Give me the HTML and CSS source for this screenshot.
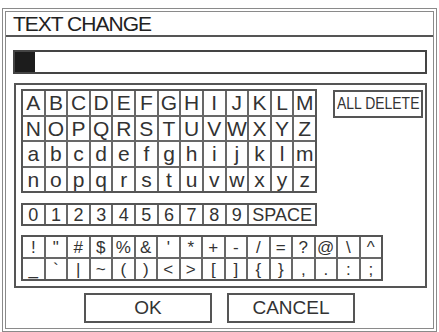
FILE: index.html
```html
<!DOCTYPE html>
<html>
<head>
<meta charset="utf-8">
<link rel="stylesheet" href="styles.css">
</head>
<body>
<div class="frame">
  <div class="title">TEXT CHANGE</div>
  <div class="input"><span class="cursor"></span></div>
  <div class="panel">
    <div class="top">
      <div class="grid letters">
        <div class="cell">A</div><div class="cell">B</div><div class="cell">C</div><div class="cell">D</div><div class="cell">E</div><div class="cell">F</div><div class="cell">G</div><div class="cell">H</div><div class="cell">I</div><div class="cell">J</div><div class="cell">K</div><div class="cell">L</div><div class="cell">M</div>
        <div class="cell">N</div><div class="cell">O</div><div class="cell">P</div><div class="cell">Q</div><div class="cell">R</div><div class="cell">S</div><div class="cell">T</div><div class="cell">U</div><div class="cell">V</div><div class="cell">W</div><div class="cell">X</div><div class="cell">Y</div><div class="cell">Z</div>
        <div class="cell">a</div><div class="cell">b</div><div class="cell">c</div><div class="cell">d</div><div class="cell">e</div><div class="cell">f</div><div class="cell">g</div><div class="cell">h</div><div class="cell">i</div><div class="cell">j</div><div class="cell">k</div><div class="cell">l</div><div class="cell">m</div>
        <div class="cell">n</div><div class="cell">o</div><div class="cell">p</div><div class="cell">q</div><div class="cell">r</div><div class="cell">s</div><div class="cell">t</div><div class="cell">u</div><div class="cell">v</div><div class="cell">w</div><div class="cell">x</div><div class="cell">y</div><div class="cell">z</div>
      </div>
      <div class="alldel"><span class="narrow">ALL DELETE</span></div>
    </div>
    <div class="grid numbers">
      <div class="cell">0</div><div class="cell">1</div><div class="cell">2</div><div class="cell">3</div><div class="cell">4</div><div class="cell">5</div><div class="cell">6</div><div class="cell">7</div><div class="cell">8</div><div class="cell">9</div><div class="cell space">SPACE</div>
    </div>
    <div class="grid symbols">
      <div class="cell">!</div><div class="cell">"</div><div class="cell">#</div><div class="cell">$</div><div class="cell">%</div><div class="cell">&amp;</div><div class="cell">'</div><div class="cell">*</div><div class="cell">+</div><div class="cell">-</div><div class="cell">/</div><div class="cell">=</div><div class="cell">?</div><div class="cell">@</div><div class="cell">\</div><div class="cell">^</div>
      <div class="cell">_</div><div class="cell">`</div><div class="cell">|</div><div class="cell">~</div><div class="cell">(</div><div class="cell">)</div><div class="cell">&lt;</div><div class="cell">&gt;</div><div class="cell">[</div><div class="cell">]</div><div class="cell">{</div><div class="cell">}</div><div class="cell">,</div><div class="cell">.</div><div class="cell">:</div><div class="cell">;</div>
    </div>
  </div>
  <div class="buttons">
    <div class="btn">OK</div>
    <div class="btn">CANCEL</div>
  </div>
</div>
</body>
</html>
```
FILE: styles.css
```css
* { box-sizing: border-box; }
html, body { margin: 0; padding: 0; background: #fff; }
body {
  font-family: "Liberation Sans", Arial, sans-serif;
  color: #333;
  overflow: hidden;
}
.frame {
  margin: 8px 0 0 2px;
  width: 435px;
  height: 324px;
  border: 4px double #8a8a8a;
  display: flex;
  flex-direction: column;
}
.title {
  height: 25px;
  border-bottom: 2px solid #555;
  font-size: 21px;
  line-height: 24px;
  padding-left: 7px;
  letter-spacing: -1px;
  color: #222;
}
.input {
  margin: 13px 0 0 7px;
  width: 414px;
  height: 24px;
  border: 2px solid #444;
  flex: none;
}
.cursor {
  display: block;
  width: 20px;
  height: 100%;
  background: #1c1c1c;
}
.panel {
  margin: 9px 0 0 8px;
  width: 413px;
  height: 205px;
  border: 2px solid #555;
  padding: 4px 0 0 5px;
  flex: none;
}
.top {
  display: flex;
  align-items: flex-start;
}
.grid {
  display: grid;
  gap: 2px;
  background: #686868;
  border: 2px solid #555;
}
.cell {
  background: #fff;
  display: flex;
  align-items: center;
  justify-content: center;
  line-height: 1;
}
.letters {
  width: 296px;
  height: 104px;
  grid-template-columns: repeat(13, 1fr);
  grid-template-rows: repeat(4, 1fr);
  font-size: 21px;
}
.alldel {
  margin: 1px 0 0 16px;
  width: 90px;
  height: 28px;
  border: 2px solid #555;
  font-size: 17px;
  display: flex;
  align-items: center;
  justify-content: center;
  white-space: nowrap;
}
.narrow {
  display: inline-block;
  transform: scaleX(0.82);
}
.numbers {
  margin-top: 10px;
  width: 296px;
  height: 23px;
  grid-template-columns: repeat(13, 1fr);
  font-size: 18px;
}
.space { grid-column: span 3; }
.symbols {
  margin-top: 9px;
  width: 362px;
  height: 46px;
  grid-template-columns: repeat(16, 1fr);
  grid-template-rows: repeat(2, 1fr);
  font-size: 17px;
}
.buttons {
  display: flex;
  justify-content: center;
  gap: 15px;
  margin-top: 5px;
}
.btn {
  width: 128px;
  height: 30px;
  border: 2px solid #555;
  font-size: 19px;
  display: flex;
  align-items: center;
  justify-content: center;
}
```
